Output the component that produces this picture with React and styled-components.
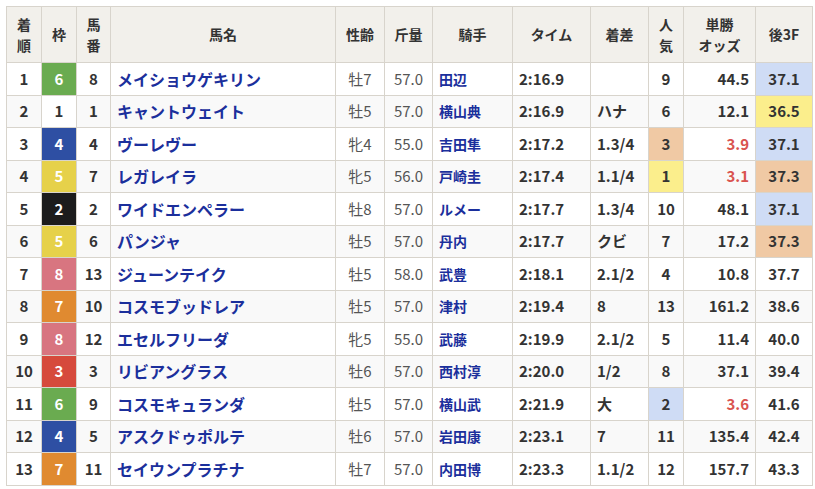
import React from "react";
import styled, { createGlobalStyle } from "styled-components";

const G = createGlobalStyle`
  body{margin:0;background:#fff;font-family:"Noto Sans CJK JP","Noto Sans",sans-serif;}
`;
const Wrap = styled.div`padding:6px 3px 0 6px;`;
const Table = styled.table`
  border-collapse:collapse;table-layout:fixed;width:806px;font-size:15px;color:#333;
`;
const Th = styled.th`
  background:#f2f0eb;border:1px solid #d8d4cc;height:55px;font-weight:bold;font-size:14px;
  line-height:21px;color:#333;padding:0;
`;
const Tr = styled.tr`background:${p => (p.$even ? "#f9f9f9" : "#fff")};`;
const Td = styled.td`
  border:1px solid #d8d4cc;height:31.5px;padding:0 ${p => p.$pad || "6px"};
  text-align:${p => p.$align || "center"};font-weight:${p => (p.$light ? "normal" : "bold")};
  color:${p => p.$color || "#333"};background:${p => p.$bg || "transparent"};
  font-size:${p => p.$fs || "15px"};
  white-space:nowrap;overflow:hidden;line-height:20px;
`;

const waku = { 1: ["#fff", "#333"], 2: ["#1c1c1c", "#fff"], 3: ["#d64a3c", "#fff"], 4: ["#2e4fa3", "#fff"], 5: ["#e6d14a", "#fff"], 6: ["#6aab50", "#fff"], 7: ["#e08a30", "#fff"], 8: ["#d87580", "#fff"] };
const NAVY = "#1b2f9c";
const rows = [
  [1,6,8,"メイショウゲキリン","牡7","57.0","田辺","2:16.9","",9,"44.5","37.1","b"],
  [2,1,1,"キャントウェイト","牡5","57.0","横山典","2:16.9","ハナ",6,"12.1","36.5","y"],
  [3,4,4,"ヴーレヴー","牝4","55.0","吉田隼","2:17.2","1.3/4",3,"3.9","37.1","b"],
  [4,5,7,"レガレイラ","牝5","56.0","戸崎圭","2:17.4","1.1/4",1,"3.1","37.3","p"],
  [5,2,2,"ワイドエンペラー","牡8","57.0","ルメー","2:17.7","1.3/4",10,"48.1","37.1","b"],
  [6,5,6,"パンジャ","牡5","57.0","丹内","2:17.7","クビ",7,"17.2","37.3","p"],
  [7,8,13,"ジューンテイク","牡5","58.0","武豊","2:18.1","2.1/2",4,"10.8","37.7",""],
  [8,7,10,"コスモブッドレア","牡5","57.0","津村","2:19.4","8",13,"161.2","38.6",""],
  [9,8,12,"エセルフリーダ","牝5","55.0","武藤","2:19.9","2.1/2",5,"11.4","40.0",""],
  [10,3,3,"リビアングラス","牡6","57.0","西村淳","2:20.0","1/2",8,"37.1","39.4",""],
  [11,6,9,"コスモキュランダ","牡5","57.0","横山武","2:21.9","大",2,"3.6","41.6",""],
  [12,4,5,"アスクドゥポルテ","牡6","57.0","岩田康","2:23.1","7",11,"135.4","42.4",""],
  [13,7,11,"セイウンプラチナ","牡7","57.0","内田博","2:23.3","1.1/2",12,"157.7","43.3",""],
];
const hl = { b: "#cfdcf5", y: "#fbee8c", p: "#f0c9a4" };
const popBg = { 1: "#fbee8c", 2: "#cfdcf5", 3: "#f0c9a4" };
const widths = [35,35,34,225,49,48,80,78,58,35,72,57];

export default function App() {
  return (
    <Wrap>
      <G />
      <Table>
        <colgroup>{widths.map((w, i) => <col key={i} style={{ width: w }} />)}</colgroup>
        <thead>
          <tr>
            <Th>着<br />順</Th><Th>枠</Th><Th>馬<br />番</Th><Th>馬名</Th><Th>性齢</Th><Th>斤量</Th>
            <Th>騎手</Th><Th>タイム</Th><Th>着差</Th><Th>人<br />気</Th><Th>単勝<br />オッズ</Th><Th>後3F</Th>
          </tr>
        </thead>
        <tbody>
          {rows.map((r, i) => (
            <Tr key={i} $even={i % 2 === 1}>
              <Td>{r[0]}</Td>
              <Td $bg={waku[r[1]][0]} $color={waku[r[1]][1]}>{r[1]}</Td>
              <Td>{r[2]}</Td>
              <Td $align="left" $color={NAVY} $fs="16px">{r[3]}</Td>
              <Td $light $color="#555">{r[4]}</Td>
              <Td $light $color="#555">{r[5]}</Td>
              <Td $align="left" $color={NAVY} $fs="14px">{r[6]}</Td>
              <Td $align="left">{r[7]}</Td>
              <Td $align="left">{r[8]}</Td>
              <Td $bg={popBg[r[9]]}>{r[9]}</Td>
              <Td $align="right" $color={r[9] <= 3 ? "#d9534f" : "#333"}>{r[10]}</Td>
              <Td $bg={hl[r[12]]}>{r[11]}</Td>
            </Tr>
          ))}
        </tbody>
      </Table>
    </Wrap>
  );
}
